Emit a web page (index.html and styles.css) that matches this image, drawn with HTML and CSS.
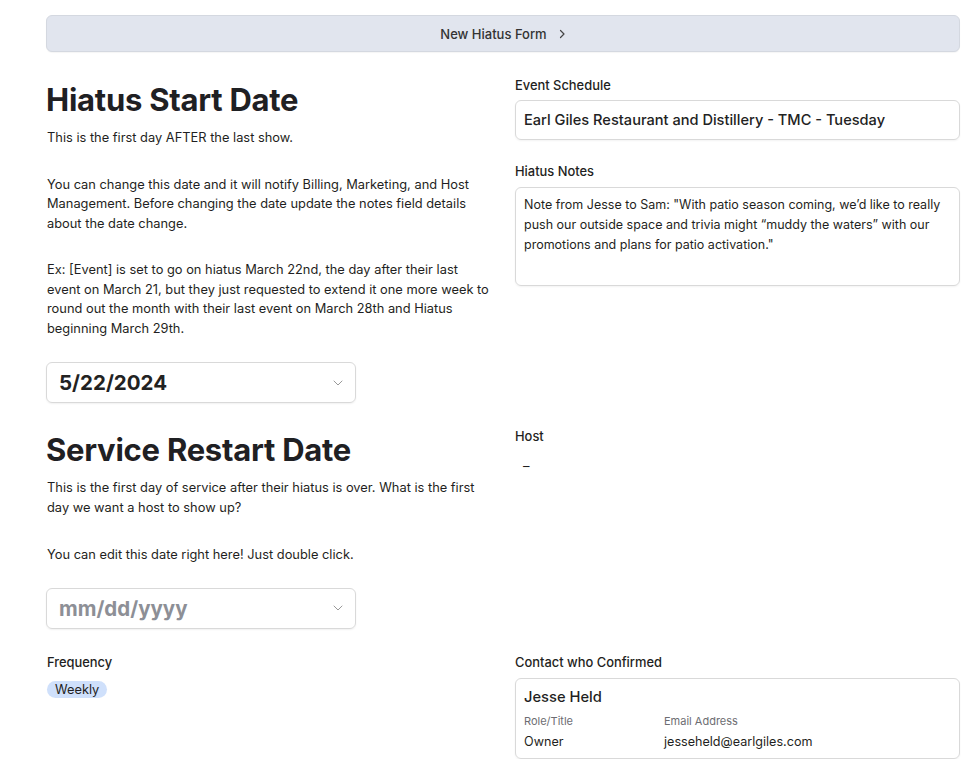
FILE: index.html
```html
<!DOCTYPE html>
<html lang="en">
<head>
    <meta charset="UTF-8">
    <title>Hiatus</title>
    <link rel="stylesheet" href="styles.css">
</head>
<body>
    <div class="page">
        <!-- Top action -->
        <button class="form-btn">New Hiatus Form
            <svg class="chev-right" width="8" height="10" viewBox="0 0 8 10"><path d="M2.5 1.5 L6 5 L2.5 8.5" fill="none" stroke="#444" stroke-width="1.2" stroke-linecap="round" stroke-linejoin="round"/></svg>
        </button>

        <div class="form-grid">
            <!-- Row 1 -->
            <div class="cell">
                <h1>Hiatus Start Date</h1>
                <p class="first">This is the first day AFTER the last show.</p>
                <p>You can change this date and it will notify Billing, Marketing, and Host Management. Before changing the date update the notes field details about the date change.</p>
                <p>Ex: [Event] is set to go on hiatus March 22nd, the day after their last event on March 21, but they just requested to extend it one more week to round out the month with their last event on March 28th and Hiatus beginning March 29th.</p>
                <div class="date-field">
                    <span class="date-value">5/22/2024</span>
                    <svg class="chev-down" width="10" height="6" viewBox="0 0 10 6"><path d="M1 1 L5 5 L9 1" fill="none" stroke="#999" stroke-width="1" stroke-linecap="round" stroke-linejoin="round"/></svg>
                </div>
            </div>
            <div class="cell">
                <div class="field-label">Event Schedule</div>
                <div class="text-field">Earl Giles Restaurant and Distillery - TMC - Tuesday</div>
                <div class="field-label spaced">Hiatus Notes</div>
                <div class="notes-field">Note from Jesse to Sam: "With patio season coming, we’d like to really push our outside space and trivia might “muddy the waters” with our promotions and plans for patio activation."</div>
            </div>

            <!-- Row 2 -->
            <div class="cell">
                <h1>Service Restart Date</h1>
                <p class="first">This is the first day of service after their hiatus is over. What is the first day we want a host to show up?</p>
                <p class="loose">You can edit this date right here! Just double click.</p>
                <div class="date-field tight">
                    <span class="date-value empty">mm/dd/yyyy</span>
                    <svg class="chev-down" width="10" height="6" viewBox="0 0 10 6"><path d="M1 1 L5 5 L9 1" fill="none" stroke="#999" stroke-width="1" stroke-linecap="round" stroke-linejoin="round"/></svg>
                </div>
            </div>
            <div class="cell nudge">
                <div class="field-label">Host</div>
                <div class="host-value">–</div>
            </div>

            <!-- Row 3 -->
            <div class="cell nudge">
                <div class="field-label">Frequency</div>
                <span class="pill">Weekly</span>
            </div>
            <div class="cell nudge">
                <div class="field-label">Contact who Confirmed</div>
                <div class="contact-card">
                    <div class="contact-name">Jesse Held</div>
                    <div class="contact-grid">
                        <div class="contact-key">Role/Title</div>
                        <div class="contact-key">Email Address</div>
                        <div class="contact-val">Owner</div>
                        <div class="contact-val">jesseheld@earlgiles.com</div>
                    </div>
                </div>
            </div>
        </div>
    </div>
</body>
</html>
```

FILE: styles.css
```css
body {
    margin: 0;
    font-family: 'Inter', 'Roboto', sans-serif;
    color: #1f1f22;
    background: #fff;
}

.page {
    padding: 15px 12px 0 46px;
}

.form-btn {
    display: flex;
    justify-content: center;
    align-items: center;
    gap: 11px;
    width: 100%;
    height: 37px;
    background: #e1e5ee;
    border: 1px solid #d4d8e0;
    border-radius: 6px;
    font-family: inherit;
    font-size: 13px;
    font-weight: 500;
    color: #333;
    box-shadow: 0 1px 1px rgba(0, 0, 0, 0.04);
}

.form-grid {
    display: grid;
    grid-template-columns: 1fr 1fr;
    column-gap: 24px;
    row-gap: 25px;
    margin-top: 26px;
    align-items: start;
}

h1 {
    margin: 0;
    font-size: 31px;
    line-height: 44px;
    font-weight: 700;
    letter-spacing: -0.25px;
    color: #1f2023;
}

p {
    margin: 27px 0 0 1px;
    font-size: 12.85px;
    line-height: 19.5px;
}

p.first {
    margin-top: 6px;
}

p.loose {
    margin-top: 28px;
}

.date-field {
    display: flex;
    justify-content: space-between;
    align-items: center;
    width: 310px;
    height: 41px;
    box-sizing: border-box;
    margin-top: 24px;
    padding: 0 12px;
    border: 1px solid #d9d9d9;
    border-radius: 6px;
    box-shadow: 0 1px 2px rgba(0, 0, 0, 0.06);
}

.date-field.tight {
    margin-top: 23px;
}

.date-value {
    font-size: 20.5px;
    font-weight: 700;
    color: #222;
}

.date-value.empty {
    color: #8d8f96;
}

.field-label {
    font-size: 12.9px;
    line-height: 16px;
    font-weight: 500;
}

.form-grid > .cell:nth-child(odd) .field-label {
    margin-left: 1px;
}

.field-label.spaced {
    margin-top: 24px;
}

.text-field {
    margin-top: 6px;
    height: 40px;
    box-sizing: border-box;
    padding: 0 8px;
    display: flex;
    align-items: center;
    border: 1px solid #d9d9d9;
    border-radius: 6px;
    font-size: 14.6px;
    font-weight: 500;
    color: #222;
    box-shadow: 0 1px 2px rgba(0, 0, 0, 0.05);
}

.notes-field {
    margin-top: 7px;
    height: 99px;
    box-sizing: border-box;
    padding: 7px 8px;
    border: 1px solid #d9d9d9;
    border-radius: 6px;
    font-size: 12.5px;
    line-height: 20px;
    box-shadow: 0 1px 2px rgba(0, 0, 0, 0.05);
}

.cell.nudge {
    padding-top: 1px;
}

.host-value {
    margin: 13px 0 0 8px;
    font-size: 13px;
}

.pill {
    display: inline-block;
    margin: 10px 0 0 1px;
    padding: 0 8px;
    height: 17px;
    line-height: 17px;
    border-radius: 9px;
    background: #cfe0fb;
    font-size: 12.8px;
}

.contact-card {
    margin-top: 7px;
    padding: 8px 8px 6px;
    border: 1px solid #d9d9d9;
    border-radius: 6px;
    box-shadow: 0 1px 2px rgba(0, 0, 0, 0.05);
}

.contact-name {
    font-size: 14.7px;
    line-height: 20px;
    font-weight: 500;
}

.contact-grid {
    display: grid;
    grid-template-columns: 140px auto;
    margin-top: 6px;
}

.contact-key {
    font-size: 11px;
    line-height: 16px;
    color: #6d6d72;
}

.contact-val {
    font-size: 12.6px;
    line-height: 20px;
    margin-top: 3px;
}
```
